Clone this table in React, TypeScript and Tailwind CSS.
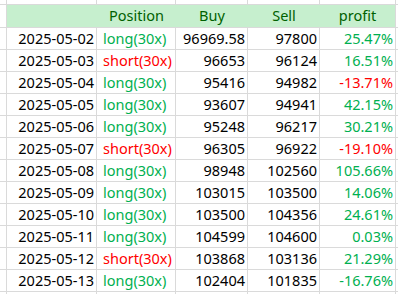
import React from "react";

type Row = {
  date: string;
  pos: string;
  short: boolean;
  buy: string;
  sell: string;
  profit: string;
  red: boolean;
};

const rows: Row[] = [
  { date: "2025-05-02", pos: "long(30x)", short: false, buy: "96969.58", sell: "97800", profit: "25.47%", red: false },
  { date: "2025-05-03", pos: "short(30x)", short: true, buy: "96653", sell: "96124", profit: "16.51%", red: false },
  { date: "2025-05-04", pos: "long(30x)", short: false, buy: "95416", sell: "94982", profit: "-13.71%", red: true },
  { date: "2025-05-05", pos: "long(30x)", short: false, buy: "93607", sell: "94941", profit: "42.15%", red: false },
  { date: "2025-05-06", pos: "long(30x)", short: false, buy: "95248", sell: "96217", profit: "30.21%", red: false },
  { date: "2025-05-07", pos: "short(30x)", short: true, buy: "96305", sell: "96922", profit: "-19.10%", red: true },
  { date: "2025-05-08", pos: "long(30x)", short: false, buy: "98948", sell: "102560", profit: "105.66%", red: false },
  { date: "2025-05-09", pos: "long(30x)", short: false, buy: "103015", sell: "103500", profit: "14.06%", red: false },
  { date: "2025-05-10", pos: "long(30x)", short: false, buy: "103500", sell: "104356", profit: "24.61%", red: false },
  { date: "2025-05-11", pos: "long(30x)", short: false, buy: "104599", sell: "104600", profit: "0.03%", red: false },
  { date: "2025-05-12", pos: "short(30x)", short: true, buy: "103868", sell: "103136", profit: "21.29%", red: false },
  { date: "2025-05-13", pos: "long(30x)", short: false, buy: "102404", sell: "101835", profit: "-16.76%", red: false },
];

const font = { fontFamily: '"Noto Sans", "Open Sans", sans-serif' };

export default function App() {
  return (
    <div
      className="w-[398px] h-[294px] overflow-hidden bg-white text-[14.5px] leading-none text-black"
      style={font}
    >
      <div className="grid grid-cols-[7px_90px_79px_72px_72px_76px_1fr] grid-rows-[5px_23px_repeat(12,22px)_1fr] h-[294px]">
        {/* top strip */}
        <div className="border-r border-b border-[#dadada]" />
        <div className="border-r border-b border-[#dadada]" />
        <div className="border-r border-b border-[#dadada]" />
        <div className="border-r border-b border-[#dadada]" />
        <div className="border-r border-b border-[#dadada]" />
        <div className="border-r border-b border-[#dadada]" />
        <div className="border-b border-[#dadada]" />

        {/* header */}
        <div className="border-r border-b border-[#dadada]" />
        <div className="bg-[#c6efce] border-b border-[#dadada]" />
        <div className="bg-[#c6efce] border-b border-[#dadada] flex items-center justify-center text-[#006100] pb-[1px]">
          Position
        </div>
        <div className="bg-[#c6efce] border-b border-[#dadada] flex items-center justify-center text-[#006100] pb-[1px]">
          Buy
        </div>
        <div className="bg-[#c6efce] border-b border-[#dadada] flex items-center justify-center text-[#006100] pb-[1px]">
          Sell
        </div>
        <div className="bg-[#c6efce] border-r border-b border-[#dadada] flex items-center justify-center text-[#006100] pb-[1px]">
          profit
        </div>
        <div className="border-b border-[#dadada]" />

        {rows.map((r) => (
          <React.Fragment key={r.date}>
            <div className="border-r border-b border-[#dadada]" />
            <div className="border-r border-b border-[#dadada] flex items-center justify-end pr-[2px]">
              {r.date}
            </div>
            <div
              className={
                r.short
                  ? "border-r border-b border-[#dadada] flex items-center justify-start pl-[6px] text-[#ff0000]"
                  : "border-r border-b border-[#dadada] flex items-center justify-start pl-[6px] text-[#00b050]"
              }
            >
              {r.pos}
            </div>
            <div className="border-r border-b border-[#dadada] flex items-center justify-end pr-[2px]">
              {r.buy}
            </div>
            <div className="border-r border-b border-[#dadada] flex items-center justify-end pr-[2px]">
              {r.sell}
            </div>
            <div
              className={
                r.red
                  ? "border-r border-b border-[#dadada] flex items-center justify-end pr-[2px] text-[#ff0000]"
                  : "border-r border-b border-[#dadada] flex items-center justify-end pr-[2px] text-[#00b050]"
              }
            >
              {r.profit}
            </div>
            <div className="border-b border-[#dadada]" />
          </React.Fragment>
        ))}

        {/* bottom strip */}
        <div className="border-r border-[#dadada]" />
        <div className="border-r border-[#dadada]" />
        <div className="border-r border-[#dadada]" />
        <div className="border-r border-[#dadada]" />
        <div className="border-r border-[#dadada]" />
        <div className="border-r border-[#dadada]" />
        <div />
      </div>
    </div>
  );
}
